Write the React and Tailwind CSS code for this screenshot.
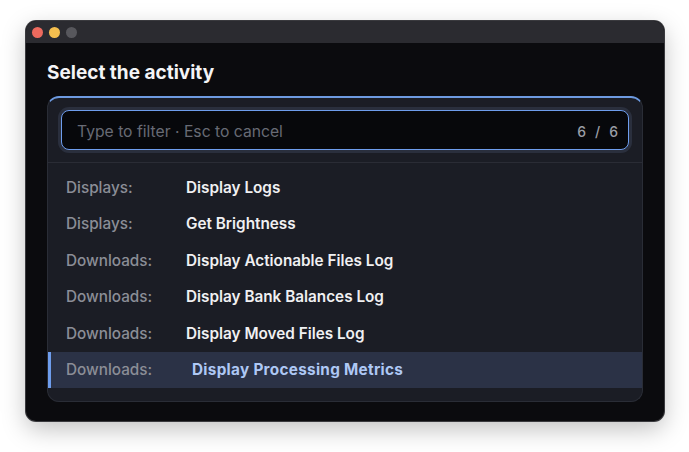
export default function App() {
  const rows = [
    ["Displays:", "Display Logs"],
    ["Displays:", "Get Brightness"],
    ["Downloads:", "Display Actionable Files Log"],
    ["Downloads:", "Display Bank Balances Log"],
    ["Downloads:", "Display Moved Files Log"],
    ["Downloads:", "Display Processing Metrics"],
  ];
  return (
    <div className="w-[689px] h-[452px] bg-white pt-[21px] pl-[26px]" style={{ fontFamily: "Inter, 'Noto Sans', sans-serif" }}>
      <div className="w-[638px] h-[400px] rounded-[10px] overflow-hidden bg-[#0b0b0e] shadow-[0_8px_24px_rgba(0,0,0,0.25)] ring-1 ring-[#3a3a3e] flex flex-col">
        <div className="h-[22px] bg-[#2b2b30] flex items-center gap-[6px] pl-[6px] shrink-0">
          <span className="w-[11px] h-[11px] rounded-full bg-[#ed6a5e]" />
          <span className="w-[11px] h-[11px] rounded-full bg-[#f5bf4f]" />
          <span className="w-[11px] h-[11px] rounded-full bg-[#57575c]" />
        </div>
        <div className="flex-1 flex flex-col px-[21px]">
          <div className="h-[53px] flex items-center">
            <h1 className="text-[19px] font-bold text-[#f4f4f6] mt-[8px]">Select the activity</h1>
          </div>
          <div className="w-[596px] h-[306px] rounded-[12px] bg-[#1b1d25] border border-[#2a2d36] border-t-2 border-t-[#6d9ae0] flex flex-col overflow-hidden">
            <div className="h-[65px] px-[13px] pt-[12px] border-b border-[#2a2c35] shrink-0">
              <div className="h-[40px] rounded-[8px] border-[1.5px] border-[#6e9ded] bg-[#07080b] shadow-[0_0_0_3px_#2a2f3d] flex items-center justify-between pl-[15px] pr-[10px]">
                <span className="text-[15.7px] text-[#686b75] mt-[3px]">Type to filter · Esc to cancel</span>
                <span className="flex gap-[9px] text-[14px] text-[#9a9ea6] font-medium mt-[2px]">
                  <span>6</span>
                  <span>/</span>
                  <span>6</span>
                </span>
              </div>
            </div>
            <div className="pt-[6px] flex flex-col">
              {rows.map(([cat, name], i) => {
                const sel = i === rows.length - 1;
                return (
                  <div
                    key={i}
                    className={
                      sel
                        ? "h-[36.5px] flex items-center pt-[2px] bg-[#2b3246] border-l-[3px] border-l-[#6e9ded] pl-[15px]"
                        : "h-[36.5px] flex items-center pt-[2px] pl-[18px]"
                    }
                  >
                    <span className="w-[120px] text-[15.3px] font-medium text-[#8b8e97]">{cat}</span>
                    {sel ? (
                      <span className="text-[15.3px] font-bold text-[#aec8f5] ml-[6px] tracking-[0.3px]">{name}</span>
                    ) : (
                      <span className="text-[15.3px] font-semibold text-[#f0f0f2]">{name}</span>
                    )}
                  </div>
                );
              })}
            </div>
          </div>
        </div>
      </div>
    </div>
  );
}
